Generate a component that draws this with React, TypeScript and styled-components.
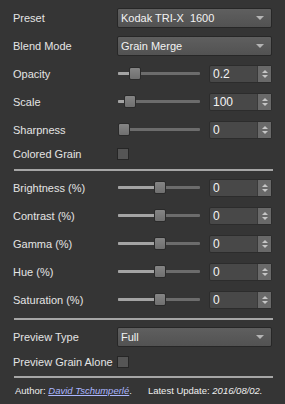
import React from "react";
import styled, { createGlobalStyle } from "styled-components";

const GlobalStyle = createGlobalStyle`
  html, body {
    margin: 0;
    padding: 0;
    background: #353535;
  }
`;

const Panel = styled.div`
  width: 285px;
  height: 404px;
  box-sizing: border-box;
  padding: 4px 13px 0 13px;
  background: #353535;
  color: #e4e4e4;
  font-family: "Liberation Sans", Arial, sans-serif;
  font-size: 11px;
  display: flex;
  flex-direction: column;
  overflow: hidden;
`;

const Row = styled.div<{ $h: number }>`
  display: grid;
  grid-template-columns: 104px 1fr;
  align-items: center;
  height: ${(p) => p.$h}px;
`;

const Label = styled.span`
  white-space: nowrap;
`;

const Divider = styled.div<{ $top: number; $bottom: number }>`
  height: 2px;
  background: #a6a6a6;
  margin: ${(p) => p.$top}px -1px ${(p) => p.$bottom}px 1px;
`;

const Combo = styled.div`
  height: 20px;
  box-sizing: border-box;
  border: 1px solid #272727;
  border-radius: 2px;
  background: linear-gradient(#5f5f5f, #525252);
  display: flex;
  align-items: center;
  justify-content: space-between;
  padding: 0 7px 0 3px;
  color: #f2f2f2;
  white-space: pre;
`;

const Arrow = styled.span`
  width: 0;
  height: 0;
  border-left: 4px solid transparent;
  border-right: 4px solid transparent;
  border-top: 4px solid #b4b4b4;
`;

const SliderLine = styled.div`
  display: flex;
  align-items: center;
  gap: 9px;
  padding-left: 1px;
`;

const Track = styled.div`
  position: relative;
  width: 82px;
  height: 14px;
`;

const Groove = styled.div`
  position: absolute;
  left: 0;
  right: 0;
  top: 5px;
  height: 3px;
  background: #6c6c6c;
  border-radius: 1px;
`;

const Filled = styled.div`
  position: absolute;
  left: 0;
  top: 5px;
  height: 3px;
  background: #a4a4a4;
  border-radius: 1px;
`;

const Handle = styled.div`
  position: absolute;
  top: 0;
  width: 12px;
  height: 13px;
  box-sizing: border-box;
  border: 1px solid #2a2a2a;
  border-radius: 2px;
  background: linear-gradient(#858585, #6f6f6f);
`;

const Spin = styled.div`
  width: 63px;
  height: 18px;
  box-sizing: border-box;
  border: 1px solid #2c2c2c;
  border-radius: 2px;
  background: #484848;
  display: flex;
  align-items: stretch;
`;

const SpinValue = styled.span`
  flex: 1;
  display: flex;
  align-items: center;
  padding-left: 3px;
  color: #f4f4f4;
  font-size: 12px;
`;

const SpinButtons = styled.div`
  width: 13px;
  background: #696969;
  border-left: 1px solid #3a3a3a;
  display: flex;
  flex-direction: column;
  align-items: center;
  justify-content: center;
  gap: 2px;
`;

const SmallArrow = styled.span<{ $up?: boolean }>`
  width: 0;
  height: 0;
  border-left: 3px solid transparent;
  border-right: 3px solid transparent;
  ${(p) =>
    p.$up ? "border-bottom: 3px solid #c6c6c6;" : "border-top: 3px solid #c6c6c6;"}
`;

const Check = styled.div`
  width: 12px;
  height: 12px;
  box-sizing: border-box;
  border: 1px solid #262626;
  background: #555555;
`;

const Footer = styled.div`
  display: flex;
  align-items: center;
  height: 20px;
  padding-left: 2px;
  font-size: 9.5px;
  color: #eeeeee;
  white-space: nowrap;
`;

const Author = styled.span`
  margin-right: 16px;
`;

const Link = styled.span`
  font-style: italic;
  color: #aab6ff;
  text-decoration: underline;
`;

const Em = styled.span`
  font-style: italic;
`;

interface SliderProps {
  label: string;
  pos: number;
  value: string;
}

const SliderRow = ({ label, pos, value }: SliderProps) => (
  <Row $h={28}>
    <Label>{label}</Label>
    <SliderLine>
      <Track>
        <Groove />
        <Filled style={{ width: pos + 6 }} />
        <Handle style={{ left: pos }} />
      </Track>
      <Spin>
        <SpinValue>{value}</SpinValue>
        <SpinButtons>
          <SmallArrow $up />
          <SmallArrow />
        </SpinButtons>
      </Spin>
    </SliderLine>
  </Row>
);

const ComboRow = ({ label, value }: { label: string; value: string }) => (
  <Row $h={28}>
    <Label>{label}</Label>
    <Combo>
      <span>{value}</span>
      <Arrow />
    </Combo>
  </Row>
);

const CheckRow = ({ label, h }: { label: string; h: number }) => (
  <Row $h={h}>
    <Label>{label}</Label>
    <Check />
  </Row>
);

export default function App() {
  return (
    <>
      <GlobalStyle />
      <Panel>
        <ComboRow label="Preset" value="Kodak TRI-X  1600" />
        <ComboRow label="Blend Mode" value="Grain Merge" />
        <SliderRow label="Opacity" pos={11} value="0.2" />
        <SliderRow label="Scale" pos={6} value="100" />
        <SliderRow label="Sharpness" pos={0} value="0" />
        <CheckRow label="Colored Grain" h={20} />
        <Divider $top={5} $bottom={3} />
        <SliderRow label="Brightness (%)" pos={36} value="0" />
        <SliderRow label="Contrast (%)" pos={36} value="0" />
        <SliderRow label="Gamma (%)" pos={36} value="0" />
        <SliderRow label="Hue (%)" pos={36} value="0" />
        <SliderRow label="Saturation (%)" pos={36} value="0" />
        <Divider $top={4} $bottom={3} />
        <ComboRow label="Preview Type" value="Full" />
        <CheckRow label="Preview Grain Alone" h={22} />
        <Divider $top={3} $bottom={2} />
        <Footer>
          <Author>
            Author: <Link>David Tschumperlé</Link>.
          </Author>
          <span>
            Latest Update: <Em>2016/08/02.</Em>
          </span>
        </Footer>
      </Panel>
    </>
  );
}
